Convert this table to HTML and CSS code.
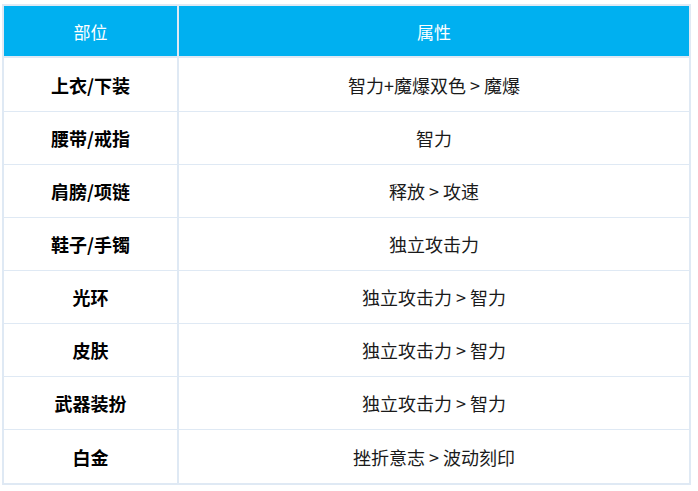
FILE: index.html
```html
<!DOCTYPE html>
<html lang="zh-CN">
<head>
<meta charset="utf-8">
<title>部位属性</title>
<link rel="stylesheet" href="styles.css">
</head>
<body>
<div class="table">
  <div class="cell head">部位</div>
  <div class="cell head">属性</div>

  <div class="cell part">上衣/下装</div>
  <div class="cell attr">智力+魔爆双色 &gt; 魔爆</div>

  <div class="cell part">腰带/戒指</div>
  <div class="cell attr">智力</div>

  <div class="cell part">肩膀/项链</div>
  <div class="cell attr">释放 &gt; 攻速</div>

  <div class="cell part">鞋子/手镯</div>
  <div class="cell attr">独立攻击力</div>

  <div class="cell part">光环</div>
  <div class="cell attr">独立攻击力 &gt; 智力</div>

  <div class="cell part">皮肤</div>
  <div class="cell attr">独立攻击力 &gt; 智力</div>

  <div class="cell part">武器装扮</div>
  <div class="cell attr">独立攻击力 &gt; 智力</div>

  <div class="cell part">白金</div>
  <div class="cell attr">挫折意志 &gt; 波动刻印</div>
</div>
</body>
</html>
```

FILE: styles.css
```css
html, body {
  margin: 0;
  padding: 0;
  background: #ffffff;
}

body {
  font-family: "Noto Sans CJK SC", "Noto Sans", "Liberation Sans", sans-serif;
  font-size: 18px;
  color: #111111;
}

.table {
  margin: 4px 0 0 2px;
  width: 685px;
  padding: 2px;
  background: #dfe9f4;
  display: grid;
  grid-template-columns: 173px 510px;
  grid-template-rows: 51px 53px repeat(6, 52px) 53px;
  column-gap: 2px;
  row-gap: 1px;
}

.cell {
  background: #ffffff;
  display: flex;
  align-items: center;
  justify-content: center;
  line-height: 1;
}

.head {
  background: #00b0f0;
  color: #ffffff;
  font-weight: 400;
  font-size: 17px;
  margin-bottom: 1px;
}

.part {
  font-weight: 700;
  color: #000000;
}

.attr {
  font-weight: 400;
  color: #1a1a1a;
}
```
